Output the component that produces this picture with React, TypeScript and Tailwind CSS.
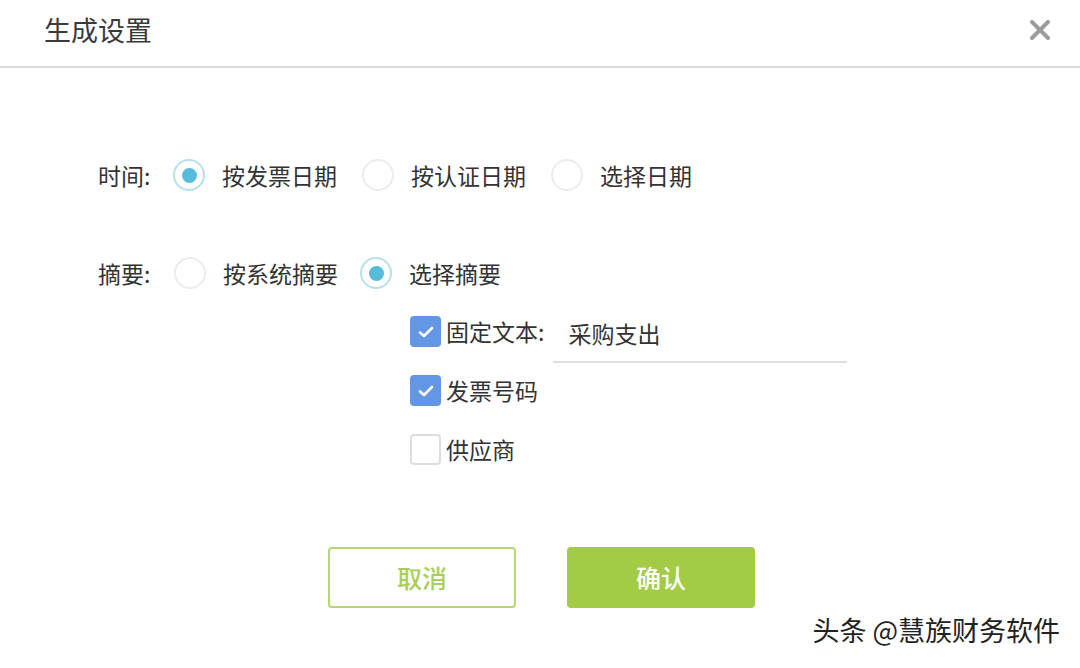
const font = { fontFamily: '"Noto Sans CJK SC", "Noto Sans", sans-serif' };

function Radio({ checked }: { checked?: boolean }) {
    return <span className={`flex items-center justify-center w-[32px] h-[32px] rounded-full border-2 ${checked ? "border-[#b6e0ec]" : "border-[#ececec]"}`}>
        {checked && <span className="w-[15px] h-[15px] rounded-full bg-[#55bcd9]" />}
    </span>
}

function Check({ checked }: { checked?: boolean }) {
    return <span className={`flex items-center justify-center w-[31px] h-[31px] rounded-[4px] ${checked ? "bg-[#6496e6]" : "border-2 border-[#dedede] bg-white"}`}>
        {checked && <svg width="20" height="16" viewBox="0 0 20 16">
            <path d="M4 8.5 L8 12 L16 4" fill="none" stroke="#fff" strokeWidth="2.6" strokeLinecap="round" strokeLinejoin="round" />
        </svg>}
    </span>
}

function Option({ checked, label, gap }: { checked?: boolean; label: string; gap: string }) {
    return <div className={`flex items-center ${gap}`}>
        <Radio checked={checked} />
        <span className="ml-[17px]">{label}</span>
    </div>
}

export default function App() {
    return <div className="relative w-[1080px] h-[668px] bg-white text-[#333] overflow-hidden" style={font}>
        <div className="flex items-center justify-between h-[68px] pl-[44px] pr-[30px] pb-[6px] border-b-2 border-[#dadada]">
            <div className="text-[27px] text-[#3a3a3a]">生成设置</div>
            <svg width="20" height="20" viewBox="0 0 20 20">
                <path d="M2 2 L18 18 M18 2 L2 18" stroke="#9c9c9c" strokeWidth="4" strokeLinecap="round" />
            </svg>
        </div>

        <div className="pl-[98px] pt-[91px] text-[23px]">
            <div className="flex items-center h-[32px]">
                <span className="w-[75px]">时间:</span>
                <Option checked label="按发票日期" gap="mr-[25px]" />
                <Option label="按认证日期" gap="mr-[25px]" />
                <Option label="选择日期" gap="" />
            </div>

            <div className="flex items-center h-[32px] mt-[66px]">
                <span className="w-[76px]">摘要:</span>
                <Option label="按系统摘要" gap="mr-[22px]" />
                <Option checked label="选择摘要" gap="" />
            </div>

            <div className="flex flex-col gap-[28px] ml-[312px] mt-[27px]">
                <div className="flex items-center h-[31px]">
                    <Check checked />
                    <span className="ml-[5px]">固定文本:</span>
                    <div className="self-start ml-[9px] w-[294px] h-[47px] pl-[15px] border-b-2 border-[#e0e0e0]">
                        <span className="leading-[31px]">采购支出</span>
                    </div>
                </div>
                <div className="flex items-center h-[31px]">
                    <Check checked />
                    <span className="ml-[5px]">发票号码</span>
                </div>
                <div className="flex items-center h-[31px]">
                    <Check />
                    <span className="ml-[5px]">供应商</span>
                </div>
            </div>
        </div>

        <div className="flex gap-[51px] pl-[328px] mt-[82px]">
            <button className="w-[188px] h-[61px] rounded-[4px] border-2 border-[#b6d676] bg-white text-[25px] font-medium text-[#a9cf58]">取消</button>
            <button className="w-[188px] h-[61px] rounded-[4px] bg-[#a3cc44] text-[25px] font-medium text-white">确认</button>
        </div>

        <div className="absolute right-[20px] bottom-[18px] text-[27px] text-[#222] [text-shadow:0_0_2px_#fff,1px_1px_1px_#fff]">头条 @慧族财务软件</div>
    </div>
}
